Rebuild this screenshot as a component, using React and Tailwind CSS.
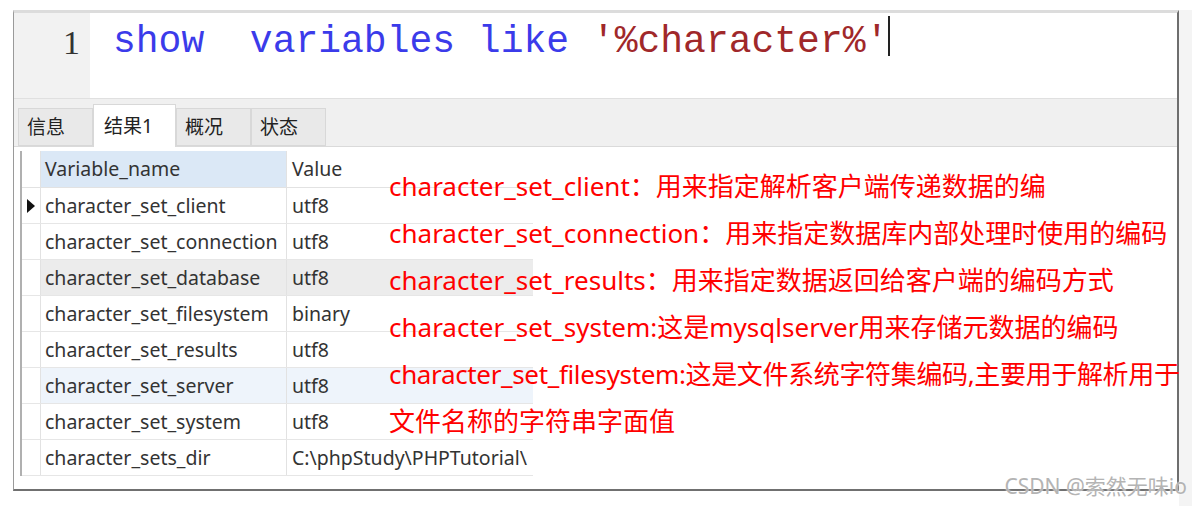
const rows = [
  { name: 'character_set_client', value: 'utf8', current: true },
  { name: 'character_set_connection', value: 'utf8' },
  { name: 'character_set_database', value: 'utf8', bg: 'bg-[#ececec]' },
  { name: 'character_set_filesystem', value: 'binary' },
  { name: 'character_set_results', value: 'utf8' },
  { name: 'character_set_server', value: 'utf8', bg: 'bg-[#eef4fb]' },
  { name: 'character_set_system', value: 'utf8' },
  { name: 'character_sets_dir', value: 'C:\\phpStudy\\PHPTutorial\\' },
]

const notes = [
  'character_set_client：用来指定解析客户端传递数据的编',
  'character_set_connection：用来指定数据库内部处理时使用的编码',
  'character_set_results：用来指定数据返回给客户端的编码方式',
  'character_set_system:这是mysqlserver用来存储元数据的编码',
  'character_set_filesystem:这是文件系统字符集编码,主要用于解析用于',
  '文件名称的字符串字面值',
]

const tabs = ['信息', '结果1', '概况', '状态']

export default function App() {
  return (
    <div className="relative w-[1192px] h-[506px] bg-white overflow-hidden font-['Noto_Sans','Noto_Sans_CJK_SC',sans-serif]">
      <div className="flex pt-[10px]">
        {/* main window */}
        <div className="ml-[13px] w-[1166px] h-[481px] border-t-[3px] border-[#dcdcdc] border-l border-l-[#9a9a9a] border-r-2 border-r-[#6e6e6e] border-b-2 border-b-[#707070] flex flex-col">
          {/* editor */}
          <div className="h-[86px] flex border-b border-[#e0e0e0]">
            <div className="w-[76px] bg-[#f2f2f2] flex justify-end pr-[10px] pt-[8px] text-[34px] leading-[44px] text-[#333] font-['Liberation_Serif',serif]">1</div>
            <div className="pl-[23px] pt-[7px] text-[38px] leading-[44px] font-['Liberation_Mono',monospace] whitespace-pre flex">
              <span className="text-[#3b3bea]">show  variables like </span>
              <span className="text-[#a0282a]">'%character%'</span>
              <span className="w-[2px] h-[40px] bg-[#222] mt-[-4px]" />
            </div>
          </div>

          {/* tabs */}
          <div className="h-[48px] bg-[#f0f0f0] flex items-end pl-[4px] pt-[4px] border-b border-[#dadada]">
            {tabs.map((t, i) => (
              <div
                key={t}
                className={`flex items-center text-[19px] text-[#222] ${
                  i === 1
                    ? 'w-[83px] h-[43px] bg-white border border-b-0 border-[#d8d8d8] pl-[10px] mb-[-1px]'
                    : 'w-[75px] h-[38px] bg-[#e9e9e9] border border-[#d8d8d8] pl-[8px]'
                }`}
              >
                {t}
              </div>
            ))}
          </div>

          {/* results grid */}
          <div className="flex-1 bg-white pl-[6px] pt-[4px]">
            <div className="w-[513px] border-l-2 border-[#b0b0b0] text-[19.5px] text-[#333]">
              <div className="flex h-[37px] border-b border-[#e2e2e2]">
                <div className="w-[19px] bg-white border-r border-[#e2e2e2]" />
                <div className="w-[246px] bg-[#dbe8f6] flex items-center pl-[4px] border-r border-[#e2e2e2]">Variable_name</div>
                <div className="flex-1 flex items-center pl-[5px]">Value</div>
              </div>
              {rows.map((r) => (
                <div key={r.name} className="flex h-[36px] border-b border-[#e6e6e6]">
                  <div className="w-[19px] border-r border-[#e2e2e2] flex items-center justify-center">
                    {r.current && (
                      <svg width="10" height="16" viewBox="0 0 10 16">
                        <path d="M1 1 L9 8 L1 15 Z" fill="#111" />
                      </svg>
                    )}
                  </div>
                  <div className={`w-[246px] flex items-center pl-[4px] border-r border-[#e2e2e2] whitespace-nowrap overflow-hidden ${r.bg || ''}`}>{r.name}</div>
                  <div className={`flex-1 flex items-center pl-[5px] whitespace-nowrap overflow-hidden ${r.bg || ''}`}>
                    {r.value}
                  </div>
                </div>
              ))}
            </div>
          </div>
        </div>
        <div className="flex-1 h-[496px] bg-[#f4f4f4]" />
      </div>

      {/* red annotations */}
      <div className="absolute left-[389px] top-[163px] flex flex-col text-[26px] leading-[47px] text-[#ff0000] whitespace-nowrap">
        {notes.map((n, i) => (
          <div key={n} className={i === 4 ? 'tracking-[-0.35px]' : ''}>{n}</div>
        ))}
      </div>

      {/* watermark */}
      <div className="absolute right-[5px] top-[472px] text-[21px] leading-[28px] text-[#b4b4b4] [text-shadow:0_0_2px_#fff]">
        CSDN @索然无味io
      </div>
    </div>
  )
}
